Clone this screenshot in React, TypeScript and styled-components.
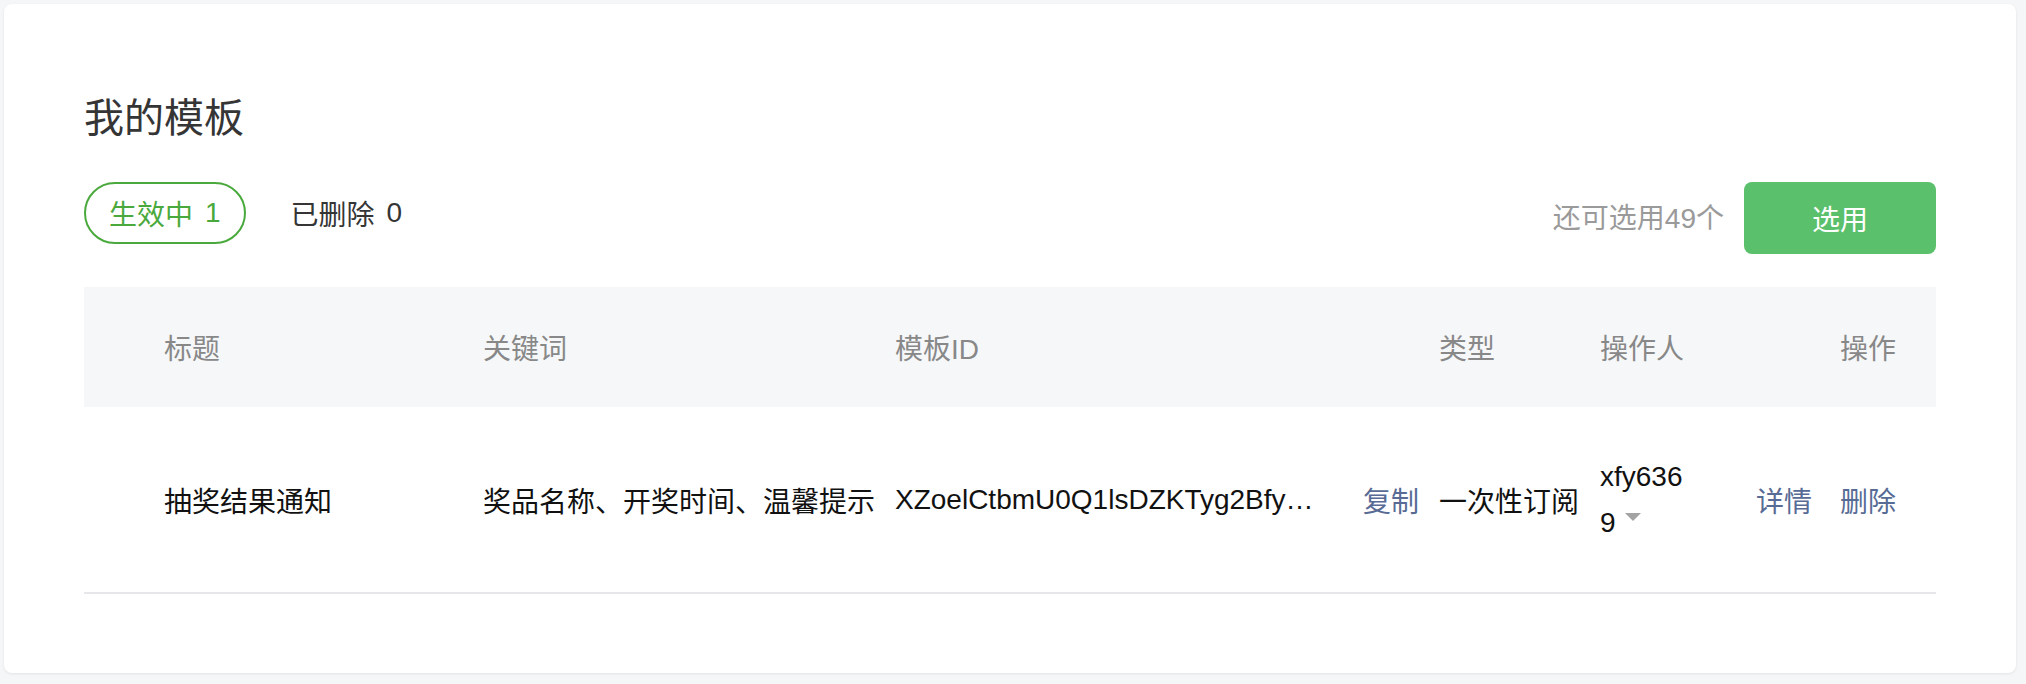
import React from "react";
import styled, { createGlobalStyle } from "styled-components";

const GlobalStyle = createGlobalStyle`
  html, body {
    margin: 0;
    padding: 0;
    background: #f5f6f8;
  }
  body {
    font-family: "Liberation Sans", "Noto Sans CJK SC", sans-serif;
    -webkit-font-smoothing: antialiased;
  }
`;

const Page = styled.div`
  padding: 4px 10px 11px 4px;
`;

const Card = styled.section`
  background: #fff;
  border-radius: 8px;
  box-shadow: 0 1px 3px rgba(0, 0, 0, 0.08);
  padding: 86px 80px 79px 80px;
  height: 669px;
  box-sizing: border-box;
`;

const Title = styled.h1`
  margin: 0;
  font-size: 40px;
  line-height: 56px;
  font-weight: 400;
  color: #353535;
`;

const Toolbar = styled.div`
  margin-top: 36px;
  display: flex;
  align-items: flex-start;
  justify-content: space-between;
`;

const Tabs = styled.div`
  display: flex;
  gap: 20px;
`;

const Tab = styled.div<{ $active?: boolean }>`
  height: 62px;
  box-sizing: border-box;
  padding: 0 23px;
  display: flex;
  align-items: center;
  border: 2px solid ${(p) => (p.$active ? "#4aa93c" : "transparent")};
  border-radius: 31px;
  font-size: 28px;
  color: ${(p) => (p.$active ? "#4aa93c" : "#353535")};
  cursor: pointer;
`;

const Count = styled.span`
  margin-left: 12px;
`;

const Actions = styled.div`
  display: flex;
  align-items: center;
  gap: 20px;
`;

const Quota = styled.span`
  font-size: 28px;
  color: #9a9a9a;
  margin-bottom: 4px;
`;

const PrimaryButton = styled.button`
  width: 192px;
  height: 72px;
  border: none;
  border-radius: 8px;
  background: #5ac06b;
  color: #fff;
  font-family: inherit;
  font-size: 28px;
  cursor: pointer;
`;

const Table = styled.div`
  margin-top: 33px;
`;

const columns = "399px 412px 544px 161px 156px 180px";

const HeadRow = styled.div`
  display: grid;
  grid-template-columns: ${columns};
  height: 120px;
  align-items: center;
  background: #f6f7f9;
  font-size: 28px;
  color: #888;
`;

const BodyRow = styled.div`
  display: grid;
  grid-template-columns: ${columns};
  height: 187px;
  box-sizing: border-box;
  align-items: center;
  border-bottom: 2px solid #e7e7eb;
  font-size: 28px;
  color: #111;
`;

const Cell = styled.div<{ $first?: boolean; $right?: boolean }>`
  padding-left: ${(p) => (p.$first ? "80px" : "0")};
  padding-right: ${(p) => (p.$right ? "40px" : "0")};
  display: flex;
  justify-content: ${(p) => (p.$right ? "flex-end" : "flex-start")};
  align-items: center;
  min-width: 0;
  white-space: nowrap;
`;

const IdCell = styled.div`
  display: flex;
  align-items: center;
  justify-content: space-between;
  padding-right: 20px;
  min-width: 0;
`;

const IdText = styled.span`
  max-width: 423px;
  overflow: hidden;
  text-overflow: ellipsis;
  white-space: nowrap;
`;

const Link = styled.a`
  color: #576b95;
  text-decoration: none;
  cursor: pointer;
  white-space: nowrap;
`;

const LinkGroup = styled.div`
  display: flex;
  gap: 28px;
`;

const Operator = styled.div`
  width: 90px;
  white-space: normal;
  word-break: break-all;
  line-height: 46px;
`;

const Caret = styled.span`
  display: inline-block;
  width: 0;
  height: 0;
  margin-left: 9px;
  border-left: 8px solid transparent;
  border-right: 8px solid transparent;
  border-top: 8px solid #a3a3a3;
  vertical-align: 11px;
`;

export default function App() {
  return (
    <>
      <GlobalStyle />
      <Page>
        <Card>
          <Title>我的模板</Title>
          <Toolbar>
            <Tabs>
              <Tab $active>
                生效中<Count>1</Count>
              </Tab>
              <Tab>
                已删除<Count>0</Count>
              </Tab>
            </Tabs>
            <Actions>
              <Quota>还可选用49个</Quota>
              <PrimaryButton>选用</PrimaryButton>
            </Actions>
          </Toolbar>
          <Table>
            <HeadRow>
              <Cell $first>标题</Cell>
              <Cell>关键词</Cell>
              <Cell>模板ID</Cell>
              <Cell>类型</Cell>
              <Cell>操作人</Cell>
              <Cell $right>操作</Cell>
            </HeadRow>
            <BodyRow>
              <Cell $first>抽奖结果通知</Cell>
              <Cell>奖品名称、开奖时间、温馨提示</Cell>
              <IdCell>
                <IdText>XZoelCtbmU0Q1lsDZKTyg2BfyVzEM0yw3bpgtV0xOEc</IdText>
                <Link>复制</Link>
              </IdCell>
              <Cell>一次性订阅</Cell>
              <Cell>
                <Operator>
                  xfy6369
                  <Caret />
                </Operator>
              </Cell>
              <Cell $right>
                <LinkGroup>
                  <Link>详情</Link>
                  <Link>删除</Link>
                </LinkGroup>
              </Cell>
            </BodyRow>
          </Table>
        </Card>
      </Page>
    </>
  );
}
